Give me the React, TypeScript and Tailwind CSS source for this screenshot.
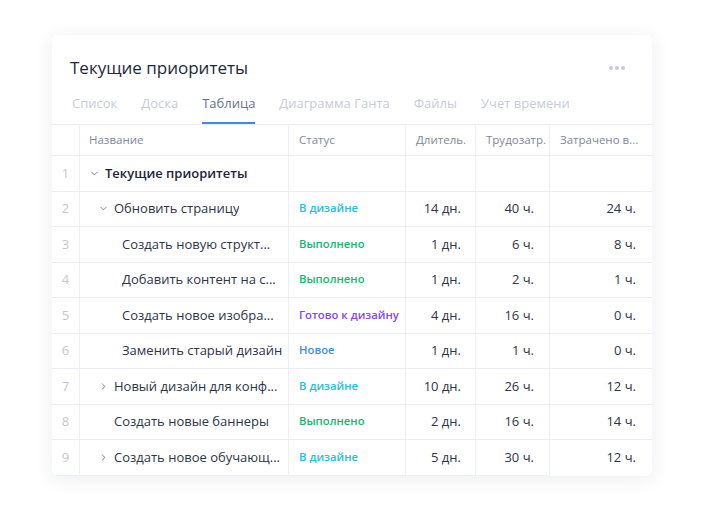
import { ChevronDown, ChevronRight } from 'lucide-react';

type Row = {
  name: string;
  level: 0 | 1 | 2;
  toggle?: 'open' | 'closed';
  bold?: boolean;
  status?: string;
  duration?: string;
  work?: string;
  spent?: string;
};

const statusColors: Record<string, string> = {
  'В дизайне': 'text-[#1cc2dd]',
  'Выполнено': 'text-[#14b86e]',
  'Готово к дизайну': 'text-[#8746f5]',
  'Новое': 'text-[#3f8de8]',
};

const rows: Row[] = [
  { name: 'Текущие приоритеты', level: 0, toggle: 'open', bold: true },
  { name: 'Обновить страницу', level: 1, toggle: 'open', status: 'В дизайне', duration: '14 дн.', work: '40 ч.', spent: '24 ч.' },
  { name: 'Создать новую структ...', level: 2, status: 'Выполнено', duration: '1 дн.', work: '6 ч.', spent: '8 ч.' },
  { name: 'Добавить контент на с...', level: 2, status: 'Выполнено', duration: '1 дн.', work: '2 ч.', spent: '1 ч.' },
  { name: 'Создать новое изобра...', level: 2, status: 'Готово к дизайну', duration: '4 дн.', work: '16 ч.', spent: '0 ч.' },
  { name: 'Заменить старый дизайн', level: 2, status: 'Новое', duration: '1 дн.', work: '1 ч.', spent: '0 ч.' },
  { name: 'Новый дизайн для конф...', level: 1, toggle: 'closed', status: 'В дизайне', duration: '10 дн.', work: '26 ч.', spent: '12 ч.' },
  { name: 'Создать новые баннеры', level: 1, status: 'Выполнено', duration: '2 дн.', work: '16 ч.', spent: '14 ч.' },
  { name: 'Создать новое обучающ...', level: 1, toggle: 'closed', status: 'В дизайне', duration: '5 дн.', work: '30 ч.', spent: '12 ч.' },
];

const tabs = ['Список', 'Доска', 'Таблица', 'Диаграмма Ганта', 'Файлы', 'Учет времени'];

const cell = 'border-b border-r border-[#edeff4] flex items-center';

function NameCell({ row }: { row: Row }) {
  // text x-offsets: level0 chevron 10px, level1 chevron 19px / text 34px, level2 text 42px
  const pad =
    row.level === 0 ? 'pl-[9px]' : row.level === 1 ? (row.toggle ? 'pl-[18px]' : 'pl-[34px]') : 'pl-[42px]';
  return (
    <div className={`${cell} ${pad} pr-[1px] min-w-0`}>
      {row.toggle === 'open' && <ChevronDown size={11} strokeWidth={1.6} className="text-[#50586b] mr-[5px] shrink-0" />}
      {row.toggle === 'closed' && <ChevronRight size={11} strokeWidth={1.6} className="text-[#50586b] mr-[5px] shrink-0" />}
      <span className={`whitespace-nowrap overflow-hidden text-[13px] ${row.bold ? 'font-semibold text-[#1f2537]' : 'text-[#2e3446]'}`}>
        {row.name}
      </span>
    </div>
  );
}

export default function App() {
  return (
    <div className="w-[704px] h-[512px] bg-white pt-[35px] pl-[52px]" style={{ fontFamily: '"Open Sans", "Noto Sans", sans-serif' }}>
      <div className="w-[600px] bg-white rounded-[5px] shadow-[0_3px_18px_rgba(40,50,90,0.09)] overflow-hidden">
        <div className="pt-[21px] px-[18px] flex items-center justify-between">
          <h1 className="text-[17px] leading-[24px] text-[#222839]">Текущие приоритеты</h1>
          <div className="flex gap-[2px] mr-[9px]">
            <span className="w-[4px] h-[4px] rounded-full bg-[#c6cbd7]" />
            <span className="w-[4px] h-[4px] rounded-full bg-[#c6cbd7]" />
            <span className="w-[4px] h-[4px] rounded-full bg-[#c6cbd7]" />
          </div>
        </div>
        <div className="mt-[13px] pl-[20px] flex gap-6">
          {tabs.map((t) => (
            <div
              key={t}
              className={`text-[13px] leading-[20px] pb-[9px] border-b-2 ${
                t === 'Таблица' ? 'text-[#6a7387] border-[#3d89e6]' : 'text-[#c7ccd8] border-transparent'
              }`}
            >
              {t}
            </div>
          ))}
        </div>
        <div className="grid grid-cols-[28px_209px_117px_70px_74px_102px] border-t border-[#edeff4]">
          <div className={`${cell} h-[31px]`} />
          <div className={`${cell} pl-[9px] text-[11.5px] text-[#7f879a]`}>Название</div>
          <div className={`${cell} pl-[10px] text-[11.5px] text-[#7f879a]`}>Статус</div>
          <div className={`${cell} pl-[10px] text-[11.5px] text-[#7f879a]`}>Длитель.</div>
          <div className={`${cell} pl-[10px] text-[11.5px] text-[#7f879a]`}>Трудозатр.</div>
          <div className={`${cell} border-r-0 pl-[10px] text-[11.5px] text-[#7f879a] min-w-0`}>
            <span className="truncate">Затрачено в...</span>
          </div>
          {rows.map((r, i) => (
            <div key={i} className="contents">
              <div className={`${cell} h-[35.5px] justify-center text-[13px] text-[#c3c7d1]`}>{i + 1}</div>
              <NameCell row={r} />
              <div className={`${cell} pl-[10px] text-[11.3px] font-semibold ${r.status ? statusColors[r.status] : ''}`}>
                {r.status}
              </div>
              <div className={`${cell} justify-end pr-[14px] text-[13px] text-[#2e3446]`}>{r.duration}</div>
              <div className={`${cell} justify-end pr-[15px] text-[13px] text-[#2e3446]`}>{r.work}</div>
              <div className={`${cell} border-r-0 justify-end pr-[16px] text-[13px] text-[#2e3446] ${i === rows.length - 1 ? 'border-b-0' : ''}`}>
                {r.spent}
              </div>
            </div>
          ))}
        </div>
      </div>
    </div>
  );
}
